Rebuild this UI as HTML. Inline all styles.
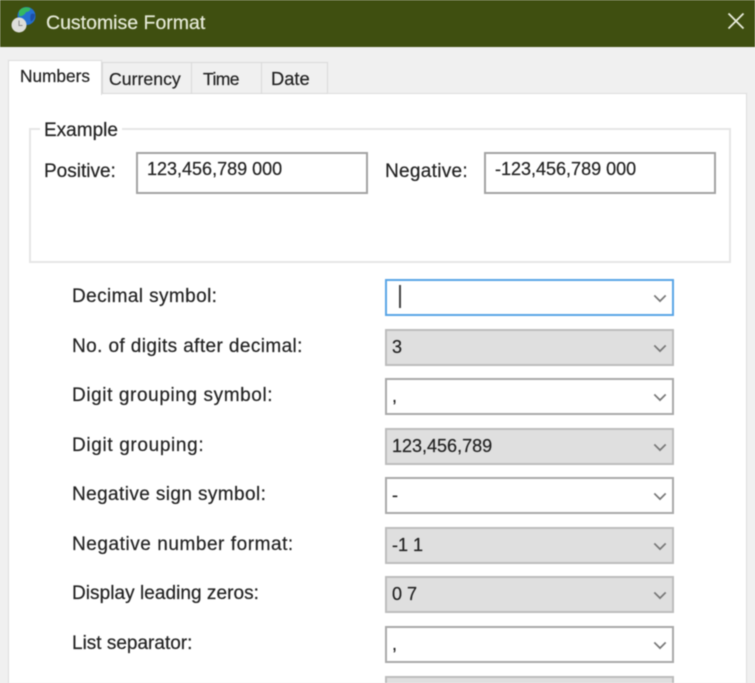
<!DOCTYPE html>
<html><head><meta charset="utf-8"><style>
html,body{margin:0;padding:0;width:755px;height:683px;overflow:hidden}
body{background:#f0f0f0;position:relative;font-family:"Liberation Sans",sans-serif;font-size:18px;color:#222;-webkit-text-stroke:.2px}
#w{position:absolute;left:0;top:0;width:755px;height:683px;overflow:hidden;filter:blur(.5px)}
.a{position:absolute;white-space:nowrap}
.title{left:0;top:0;width:755px;height:47px;background:#3f4f10}
.panel{left:8px;top:93px;width:739px;height:590px;background:#fff;border:1px solid #dcdcdc;border-bottom:0;box-sizing:border-box}
.tab{top:62px;height:32px;box-sizing:border-box;background:#f0f0f0;border:1px solid #d9d9d9;line-height:32px;text-align:left}
.group{left:29px;top:128px;width:702px;height:135px;box-sizing:border-box;border:2px solid #e6e6e6}
.box{box-sizing:border-box;height:42px;top:152px;border:2px solid #a3a3a3;background:#fff;padding:0 0 0 9px;line-height:30px}
.lab{left:72px;line-height:20px;font-size:19px}
.c{left:385px;width:289px;height:37px;box-sizing:border-box;border:2px solid #a9a9a9;background:#fff;line-height:33px;padding-left:5px}
.c.g{background:#dfdfdf;border-color:#bdbdbd}
.c svg{position:absolute;right:5px;top:13px}
</style></head><body><div id="w">
<div class="a title"></div>
<svg class="a" style="left:10px;top:6px" width="28" height="30" viewBox="0 0 28 30"><circle cx="16.500" cy="10" r="9" fill="#2470d0"/><path d="M9 5c2-3.500 7-4.500 11-3 1 2-1 4-4 4-1 3-5 5-7 4z" fill="#35b860"/><path d="M21 8c1.500-.5 3-.5 4 .5 0 3-1.500 5.500-4 7-1-2.500-1-5 0-7.500z" fill="#1c4fa8"/><circle cx="9" cy="19" r="7.500" fill="#dededa"/><path d="M9 14.500v5h3.500" fill="none" stroke="#888" stroke-width="1"/></svg>
<div class="a" style="left:46px;top:12px;color:#e6ead8;font-size:19.500px;line-height:22px">Customise Format</div>
<svg class="a" style="left:727px;top:12px" width="18" height="18" viewBox="0 0 18 18"><path d="M1.500 1.500L16.500 16.500M16.500 1.500L1.500 16.500" stroke="#e8ecdc" stroke-width="1.800" fill="none"/></svg>
<div class="a panel"></div>
<div class="a tab" style="left:102px;width:90px;padding-left:6px;font-size:17.700px">Currency</div>
<div class="a tab" style="left:191px;width:71px;padding-left:11px;font-size:17.500px;letter-spacing:-.6px">Time</div>
<div class="a tab" style="left:261px;width:67px;padding-left:9px;font-size:18.300px">Date</div>
<div class="a" style="left:8px;top:60px;width:94px;height:35px;box-sizing:border-box;background:#fff;border:1px solid #dcdcdc;border-bottom:0;padding-left:11px;line-height:30px;font-size:17.250px">Numbers</div>
<div class="a group"></div>
<div class="a" style="left:40px;top:121px;background:#fff;padding:0 4px;line-height:20px;font-size:19px">Example</div>
<div class="a" style="left:44px;top:162px;line-height:20px;font-size:19px">Positive:</div>
<div class="a box" style="left:136px;width:232px">123,456,789 000</div>
<div class="a" style="left:385px;top:162px;line-height:20px;font-size:19px;letter-spacing:.3px">Negative:</div>
<div class="a box" style="left:484px;width:232px">-123,456,789 000</div>

<div class="a lab" style="top:287px;letter-spacing:.4px">Decimal symbol:</div>
<div class="a lab" style="top:337px;letter-spacing:.4px">No. of digits after decimal:</div>
<div class="a lab" style="top:386px;letter-spacing:.6px">Digit grouping symbol:</div>
<div class="a lab" style="top:436px;letter-spacing:.65px">Digit grouping:</div>
<div class="a lab" style="top:485px;letter-spacing:.4px">Negative sign symbol:</div>
<div class="a lab" style="top:535px;letter-spacing:.55px">Negative number format:</div>
<div class="a lab" style="top:584px;letter-spacing:.05px">Display leading zeros:</div>
<div class="a lab" style="top:634px">List separator:</div>

<div class="a c" style="top:279px;border-color:#5aa5e6"><div class="a" style="left:12px;top:4px;width:2px;height:23px;background:#444"></div><svg width="14" height="9" viewBox="0 0 16 10"><path d="M1.500 1.500L8 8L14.500 1.500" fill="none" stroke="#777" stroke-width="2"/></svg></div>
<div class="a c g" style="top:329px">3<svg width="14" height="9" viewBox="0 0 16 10"><path d="M1.500 1.500L8 8L14.500 1.500" fill="none" stroke="#777" stroke-width="2"/></svg></div>
<div class="a c" style="top:378px;">,<svg width="14" height="9" viewBox="0 0 16 10"><path d="M1.500 1.500L8 8L14.500 1.500" fill="none" stroke="#777" stroke-width="2"/></svg></div>
<div class="a c g" style="top:428px">123,456,789<svg width="14" height="9" viewBox="0 0 16 10"><path d="M1.500 1.500L8 8L14.500 1.500" fill="none" stroke="#777" stroke-width="2"/></svg></div>
<div class="a c" style="top:477px">-<svg width="14" height="9" viewBox="0 0 16 10"><path d="M1.500 1.500L8 8L14.500 1.500" fill="none" stroke="#777" stroke-width="2"/></svg></div>
<div class="a c g" style="top:527px">-1 1<svg width="14" height="9" viewBox="0 0 16 10"><path d="M1.500 1.500L8 8L14.500 1.500" fill="none" stroke="#777" stroke-width="2"/></svg></div>
<div class="a c g" style="top:576px">0 7<svg width="14" height="9" viewBox="0 0 16 10"><path d="M1.500 1.500L8 8L14.500 1.500" fill="none" stroke="#777" stroke-width="2"/></svg></div>
<div class="a c" style="top:626px">,<svg width="14" height="9" viewBox="0 0 16 10"><path d="M1.500 1.500L8 8L14.500 1.500" fill="none" stroke="#777" stroke-width="2"/></svg></div>
<div class="a c g" style="top:676px"></div>
</div></body></html>
